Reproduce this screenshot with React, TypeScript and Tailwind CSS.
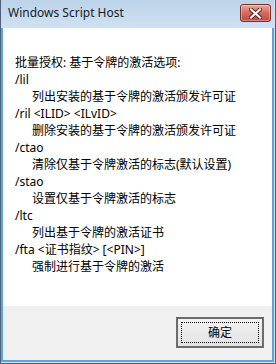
const lines: { text: string; indent?: boolean }[] = [
  { text: '批量授权: 基于令牌的激活选项:' },
  { text: '/lil' },
  { text: '列出安装的基于令牌的激活颁发许可证', indent: true },
  { text: '/ril <ILID> <ILvID>' },
  { text: '删除安装的基于令牌的激活颁发许可证', indent: true },
  { text: '/ctao' },
  { text: '清除仅基于令牌激活的标志(默认设置)', indent: true },
  { text: '/stao' },
  { text: '设置仅基于令牌激活的标志', indent: true },
  { text: '/ltc' },
  { text: '列出基于令牌的激活证书', indent: true },
  { text: '/fta <证书指纹> [<PIN>]' },
  { text: '强制进行基于令牌的激活', indent: true },
];

function CloseButton() {
  return (
    <div className="mt-[4px] mr-[3px] flex h-[18px] w-[31px] items-center justify-center rounded-[3px] border border-[#7b2c26] bg-gradient-to-b from-[#eaa89f] via-[#d3695e] to-[#c24a3d] shadow-[inset_0_0_0_1px_rgba(255,255,255,0.35)]">
      <svg width="13" height="11" viewBox="0 0 13 11">
        <path d="M2 1.5 L11 9.5 M11 1.5 L2 9.5" stroke="#5a1d18" strokeWidth="4" strokeLinecap="square" />
        <path d="M2 1.5 L11 9.5 M11 1.5 L2 9.5" stroke="#ffffff" strokeWidth="2.2" strokeLinecap="square" />
      </svg>
    </div>
  );
}

export default function App() {
  return (
    <div
      className="flex h-[364px] w-[276px] flex-col border-x border-b border-[#4d6178] bg-[#cfe0f2] pr-px pb-px"
      style={{ fontFamily: '"Noto Sans", "Noto Sans CJK SC", sans-serif' }}
    >
      {/* Title bar */}
      <div className="flex h-[28px] shrink-0 items-start justify-between bg-gradient-to-b from-[#bdd3ea] to-[#d0e1f3]">
        <span className="mt-[5px] ml-[7px] text-[12px] leading-[16px] text-[#1b1b1b]">Windows Script Host</span>
        <CloseButton />
      </div>

      {/* Client area */}
      <div className="flex flex-1 flex-col border-x-2 border-b-2 border-[#5ca5dc]">
        <div className="flex-1 bg-white pt-[26px] pl-[12px] text-[12px] leading-[17px] text-black">
          {lines.map((l, i) => (
            <div key={i} className={l.indent ? 'pl-[17px]' : ''}>
              {l.text}
            </div>
          ))}
        </div>
        <div className="flex h-[54px] shrink-0 items-start justify-end bg-[#f0f0f0] pt-[11px] pr-[8px]">
          <button className="flex h-[31px] w-[88px] items-center justify-center border-2 border-[#6c6c6c] bg-gradient-to-b from-[#f2f2f2] to-[#e2e2e2] p-[3px] text-[12px] text-black">
            <span className="flex h-full w-full items-center justify-center border border-dotted border-black">
              确定
            </span>
          </button>
        </div>
      </div>
    </div>
  );
}
